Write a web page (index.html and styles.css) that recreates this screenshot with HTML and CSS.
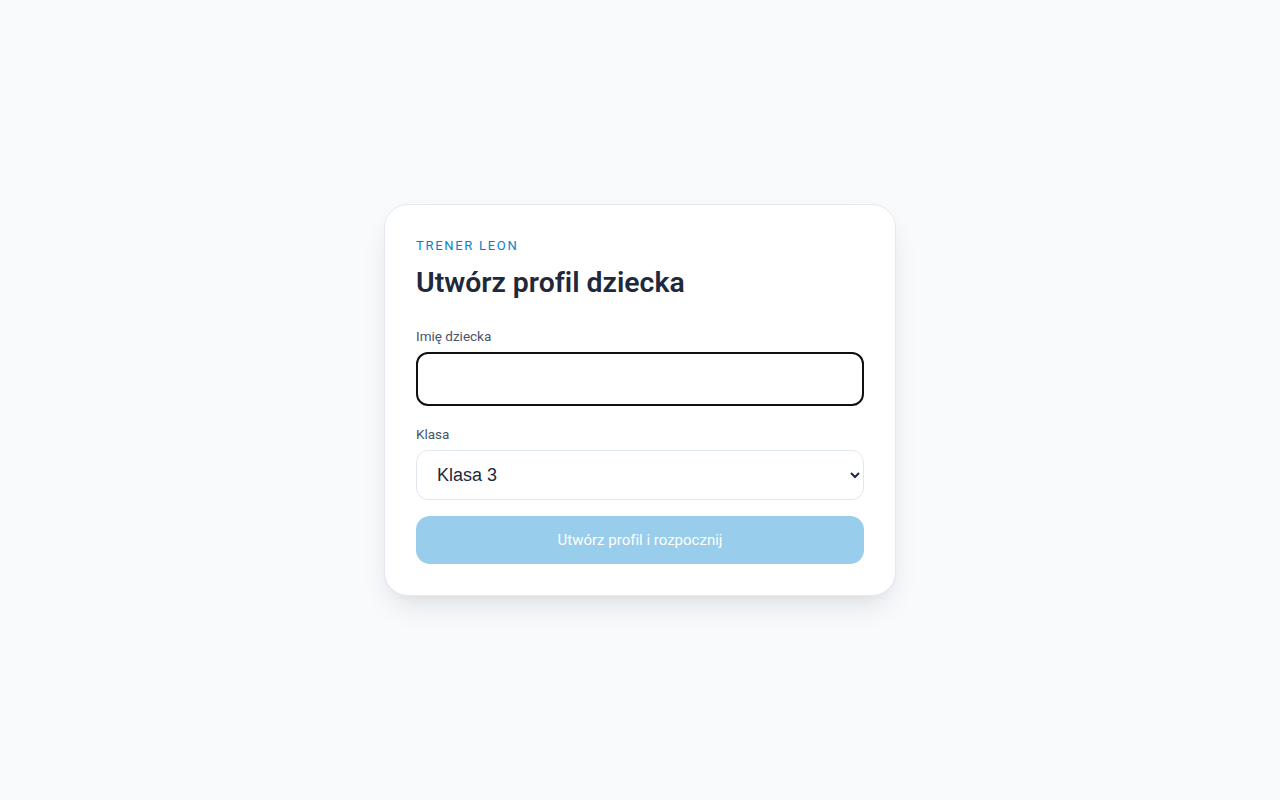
FILE: index.html
```html
<!DOCTYPE html>
<html lang="pl">
<head>
<meta charset="utf-8">
<title>Trener Leon</title>
<link rel="stylesheet" href="styles.css">
</head>
<body>
<main class="page">
  <form class="card">
    <div class="eyebrow">TRENER LEON</div>
    <h1 class="title">Utwórz profil dziecka</h1>
    <label class="field">
      <span class="label">Imię dziecka</span>
      <input class="input" type="text">
    </label>
    <label class="field field-second">
      <span class="label">Klasa</span>
      <select class="select">
        <option>Klasa 1</option>
        <option>Klasa 2</option>
        <option selected>Klasa 3</option>
        <option>Klasa 4</option>
      </select>
    </label>
    <button class="submit" type="button" disabled>Utwórz profil i rozpocznij</button>
  </form>
</main>
</body>
</html>
```
FILE: styles.css
```css
* { box-sizing: border-box; }
html, body { margin: 0; padding: 0; }
body {
  background: #f8fafc;
  font-family: Roboto, "Liberation Sans", Arial, sans-serif;
  font-variant-ligatures: none;
  color: #1e293b;
}
.page {
  min-height: 800px;
  display: flex;
  align-items: center;
  justify-content: center;
}
.card {
  width: 512px;
  background: #fff;
  border: 1px solid #e5eaf1;
  border-radius: 24px;
  padding: 32px 31px 31px;
  box-shadow: 0 14px 30px -8px rgba(15, 23, 42, 0.13), 0 4px 8px -4px rgba(15, 23, 42, 0.05);
  display: flex;
  flex-direction: column;
}
.eyebrow {
  font-size: 13px;
  letter-spacing: 1.7px;
  color: #0284c7;
  line-height: 18px;
}
.title {
  margin: 10px 0 0;
  font-size: 28.4px;
  font-weight: 600;
  line-height: 36px;
  color: #1e293b;
}
.field {
  display: flex;
  flex-direction: column;
  margin-top: 26px;
}
.field-second { margin-top: 19px; }
.label {
  font-size: 13.5px;
  color: #475569;
  line-height: 18px;
  margin-bottom: 7px;
}
.input {
  height: 54px;
  border: 2px solid #101010;
  border-radius: 12px;
  font: inherit;
  font-size: 18px;
  padding: 0 19px;
  outline: none;
  background: #fff;
}
.select {
  height: 50px;
  border: 1px solid #e2e8f0;
  border-radius: 12px;
  font-family: "Liberation Sans", Arial, sans-serif;
  font-size: 18px;
  color: #1e293b;
  padding: 0 16px;
  background: #fff;
}
.submit {
  margin-top: 16px;
  height: 48px;
  border: 0;
  border-radius: 14px;
  background: #98cdec;
  color: #fff;
  font: inherit;
  font-size: 15px;
}
```
